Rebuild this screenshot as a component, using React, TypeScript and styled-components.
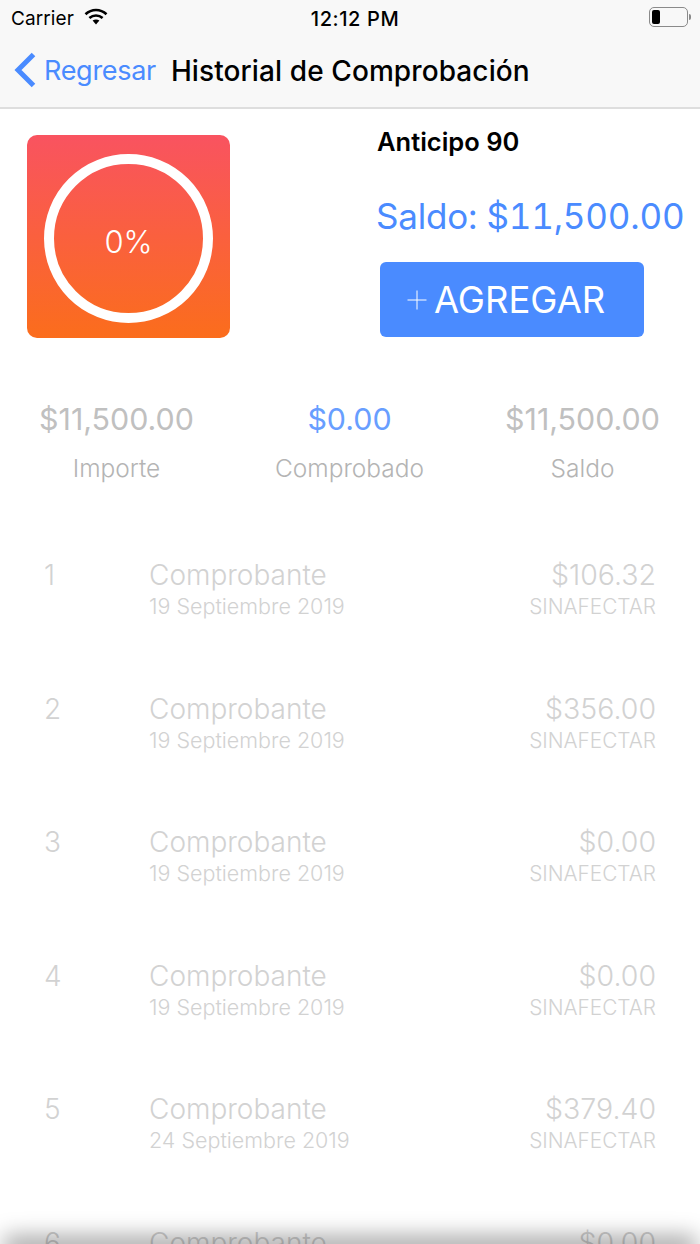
import React from 'react';
import styled, { createGlobalStyle } from 'styled-components';

interface Voucher {
  id: number;
  date: string;
  amount: string;
}

const vouchers: Voucher[] = [
  { id: 1, date: '19 Septiembre 2019', amount: '$106.32' },
  { id: 2, date: '19 Septiembre 2019', amount: '$356.00' },
  { id: 3, date: '19 Septiembre 2019', amount: '$0.00' },
  { id: 4, date: '19 Septiembre 2019', amount: '$0.00' },
  { id: 5, date: '24 Septiembre 2019', amount: '$379.40' },
  { id: 6, date: '24 Septiembre 2019', amount: '$0.00' },
];

const App = () => {
  return (
    <>
      <GlobalStyle />
      <Screen>
        <TopBar>
          <StatusBar>
            <Carrier>
              Carrier
              <svg width="24" height="17" viewBox="0 0 24 17">
                <path d="M1.5 6.2C7.6.6 16.4.6 22.5 6.2" fill="none" stroke="#000" strokeWidth="2.6" />
                <path d="M5.4 10C9.3 6.6 14.7 6.6 18.6 10" fill="none" stroke="#000" strokeWidth="2.6" />
                <path d="M8.6 12.6c2-1.5 4.8-1.5 6.8 0L12 16.4z" fill="#000" />
              </svg>
            </Carrier>
            <Clock>12:12 PM</Clock>
            <Battery>
              <BatteryBody>
                <BatteryLevel />
              </BatteryBody>
              <BatteryCap />
            </Battery>
          </StatusBar>
          <NavBar>
            <BackLink>
              <svg width="24" height="36" viewBox="0 0 24 36">
                <path d="M21.5 2.5 6 18l15.5 15.5" fill="none" stroke="#4a8bff" strokeWidth="5" />
              </svg>
              Regresar
            </BackLink>
            <NavTitle>Historial de Comprobación</NavTitle>
          </NavBar>
        </TopBar>

        <Summary>
          <ProgressCard>
            <ProgressRing>0%</ProgressRing>
          </ProgressCard>
          <SummaryInfo>
            <AdvanceName>Anticipo 90</AdvanceName>
            <Balance>Saldo: $11,500.00</Balance>
            <AddButton>
              <svg width="20" height="20" viewBox="0 0 20 20">
                <path d="M10 .5v19M.5 10h19" fill="none" stroke="#fff" strokeWidth="1" />
              </svg>
              AGREGAR
            </AddButton>
          </SummaryInfo>
        </Summary>

        <Totals>
          <TotalCell>
            <TotalValue>$11,500.00</TotalValue>
            <TotalLabel>Importe</TotalLabel>
          </TotalCell>
          <TotalCell>
            <TotalValue $accent>$0.00</TotalValue>
            <TotalLabel>Comprobado</TotalLabel>
          </TotalCell>
          <TotalCell>
            <TotalValue>$11,500.00</TotalValue>
            <TotalLabel>Saldo</TotalLabel>
          </TotalCell>
        </Totals>

        <VoucherList>
          {vouchers.map((voucher) => (
            <VoucherRow key={voucher.id}>
              <VoucherIndex>{voucher.id}</VoucherIndex>
              <VoucherMain>
                <VoucherTitle>Comprobante</VoucherTitle>
                <VoucherDate>{voucher.date}</VoucherDate>
              </VoucherMain>
              <VoucherSide>
                <VoucherAmount>{voucher.amount}</VoucherAmount>
                <VoucherStatus>SINAFECTAR</VoucherStatus>
              </VoucherSide>
            </VoucherRow>
          ))}
        </VoucherList>

        <BottomShade />
      </Screen>
    </>
  );
};

export default App;

const GlobalStyle = createGlobalStyle`
  * {
    margin: 0;
    padding: 0;
    box-sizing: border-box;
  }
  body {
    font-family: 'Inter', 'Liberation Sans', sans-serif;
    background-color: #fff;
  }
`;

const Screen = styled.div`
  position: relative;
  width: 700px;
  height: 1244px;
  overflow: hidden;
  background: #fff;
`;

const TopBar = styled.div`
  height: 109px;
  background: #f8f8f8;
  border-bottom: 2px solid #dedede;
`;

const StatusBar = styled.div`
  height: 37px;
  display: grid;
  grid-template-columns: 1fr auto 1fr;
  align-items: center;
  padding: 0 9px 0 11px;
  color: #000;
`;

const Carrier = styled.div`
  display: flex;
  align-items: center;
  gap: 10px;
  font-size: 19px;
  letter-spacing: 0.1px;

  svg {
    margin-top: -4px;
  }
`;

const Clock = styled.div`
  margin-left: 8px;
  font-weight: 500;
  font-size: 20px;
  letter-spacing: 0.6px;
`;

const Battery = styled.div`
  justify-self: end;
  display: flex;
  align-items: center;
  gap: 1px;
  margin-top: -3px;
`;

const BatteryBody = styled.div`
  width: 39px;
  height: 20px;
  padding: 2px;
  border: 1.5px solid #8a8a8a;
  border-radius: 5px;
`;

const BatteryLevel = styled.div`
  width: 8px;
  height: 100%;
  background: #000;
  border-radius: 2px;
`;

const BatteryCap = styled.div`
  width: 2px;
  height: 6px;
  background: #8a8a8a;
  border-radius: 0 2px 2px 0;
`;

const NavBar = styled.div`
  height: 70px;
  display: flex;
  align-items: center;
  padding: 0 0 3px 12px;
  gap: 15px;
`;

const BackLink = styled.div`
  display: flex;
  align-items: center;
  gap: 8px;
  font-size: 27px;
  letter-spacing: -0.3px;
  color: #4a8bff;

  svg {
    margin-top: -2px;
  }
`;

const NavTitle = styled.div`
  font-size: 28px;
  font-weight: 500;
  letter-spacing: 0.1px;
  color: #000;
`;

const Summary = styled.div`
  display: flex;
  padding: 26px 0 0 27px;
`;

const ProgressCard = styled.div`
  width: 203px;
  height: 203px;
  display: flex;
  align-items: center;
  justify-content: center;
  padding-top: 3px;
  border-radius: 10px;
  background: linear-gradient(180deg, #f95360 0%, #fb6d1c 100%);
`;

const ProgressRing = styled.div`
  width: 169px;
  height: 169px;
  display: flex;
  align-items: center;
  justify-content: center;
  padding-top: 7px;
  border: 10px solid #fff;
  border-radius: 50%;
  font-size: 31px;
  font-weight: 300;
  color: #fff;
`;

const SummaryInfo = styled.div`
  display: flex;
  flex-direction: column;
  margin-left: 147px;
`;

const AdvanceName = styled.div`
  height: 30px;
  margin-top: -10px;
  display: flex;
  align-items: center;
  padding-top: 2px;
  font-size: 25.5px;
  font-weight: 600;
  color: #000;
`;

const Balance = styled.div`
  margin-top: 39px;
  margin-left: -1px;
  font-size: 35px;
  line-height: 44px;
  letter-spacing: -0.2px;
  white-space: nowrap;
  font-feature-settings: 'tnum';
  color: #4a8bff;
`;

const AddButton = styled.div`
  width: 264px;
  height: 75px;
  margin: 24px 0 0 3px;
  display: flex;
  align-items: center;
  gap: 7px;
  padding-left: 27px;
  border-radius: 6px;
  background: #4a8bff;
  font-size: 36.4px;
  color: #fff;
`;

const Totals = styled.div`
  display: grid;
  grid-template-columns: repeat(3, 233px);
  margin-top: 63px;
`;

const TotalCell = styled.div`
  display: flex;
  flex-direction: column;
  align-items: center;
`;

const TotalValue = styled.div<{ $accent?: boolean }>`
  font-size: 30.4px;
  line-height: 36px;
  color: ${(props) => (props.$accent ? '#689eff' : '#c0c0c0')};
`;

const TotalLabel = styled.div`
  margin-top: 16px;
  font-size: 24.5px;
  line-height: 30px;
  font-weight: 300;
  color: #b4b4b4;
`;

const VoucherList = styled.div`
  margin-top: 74px;
  padding: 0 44px;
`;

const VoucherRow = styled.div`
  height: 133.5px;
  display: flex;
  align-items: flex-start;
`;

const VoucherIndex = styled.div`
  width: 105px;
  font-size: 28px;
  line-height: 36px;
  font-weight: 300;
  color: #d2d2d2;
`;

const VoucherMain = styled.div`
  flex: 1;
`;

const VoucherTitle = styled.div`
  font-size: 28px;
  line-height: 36px;
  font-weight: 300;
  color: #d2d2d2;
`;

const VoucherDate = styled.div`
  font-size: 21.5px;
  line-height: 26px;
  font-weight: 300;
  color: #d2d2d2;
`;

const VoucherSide = styled.div`
  display: flex;
  flex-direction: column;
  align-items: flex-end;
`;

const VoucherAmount = styled.div`
  font-size: 28.5px;
  line-height: 36px;
  font-weight: 300;
  color: #d2d2d2;
`;

const VoucherStatus = styled.div`
  margin-top: 1px;
  font-size: 20.8px;
  line-height: 26px;
  font-weight: 300;
  color: #d2d2d2;
`;

const BottomShade = styled.div`
  position: absolute;
  left: 12px;
  right: 12px;
  bottom: -6px;
  height: 6px;
  box-shadow: 0 0 22px 8px rgba(0, 0, 0, 0.36);
`;
